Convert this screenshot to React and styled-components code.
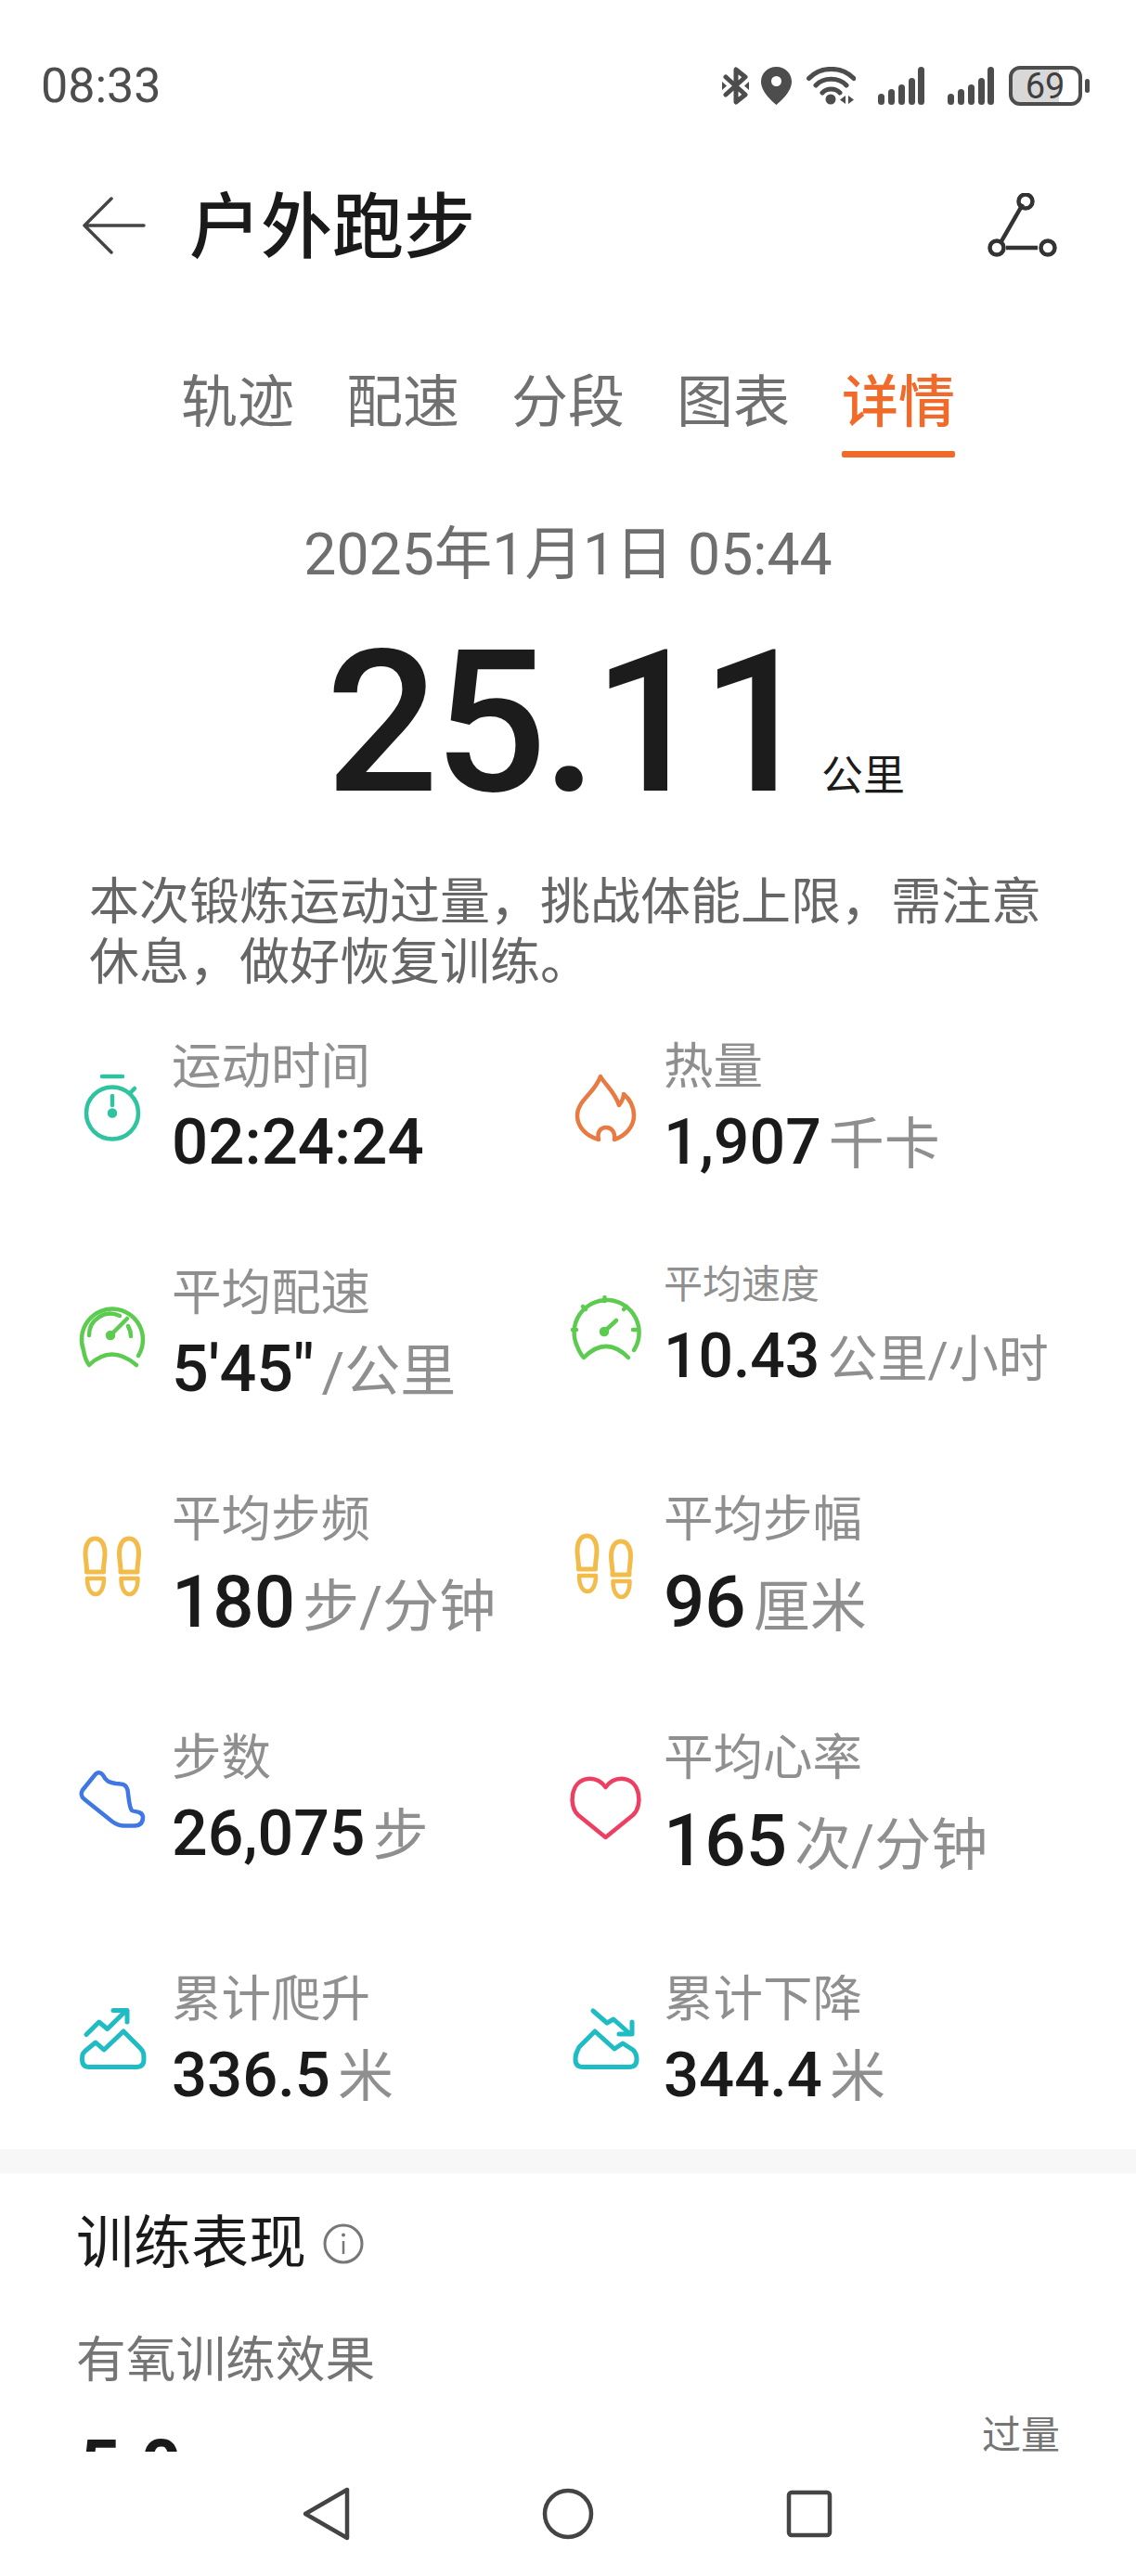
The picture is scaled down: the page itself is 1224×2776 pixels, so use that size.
import React from "react";
import styled, { createGlobalStyle } from "styled-components";

const Global = createGlobalStyle`
  html, body { margin: 0; padding: 0; background: #fff; }
  * { box-sizing: border-box; }
  body { font-family: Roboto, "Noto Sans CJK SC", sans-serif; color: #1a1a1a; }
`;

const Page = styled.div`
  width: 1224px;
  height: 2776px;
  overflow: hidden;
  background: #fff;
  display: flex;
  flex-direction: column;
`;
const Scroller = styled.main`
  height: 2642px;
  overflow: hidden;
  flex: none;
`;
const StatusBar = styled.div`
  height: 184px;
  padding: 0 50px 0 44px;
  display: flex;
  align-items: center;
  justify-content: space-between;
`;
const Clock = styled.span`
  font-size: 52px;
  color: #4d4d4d;
`;
const StatusIcons = styled.div`
  display: flex;
  align-items: center;
`;
const StatusGlyph = styled.svg`
  display: block;
  flex: none;
  margin-left: ${(p) => p.$gap}px;
  fill: #4d4d4d;
`;
const Header = styled.header`
  height: 118px;
  padding: 0 84px 0 88px;
  display: flex;
  align-items: center;
`;
const BackIcon = styled.svg`
  display: block;
  flex: none;
  margin-right: 46px;
`;
const Title = styled.h1`
  margin: 6px 0 0;
  flex: 1;
  font-size: 77px;
  line-height: 100px;
  font-weight: 500;
  color: #1a1a1a;
`;
const RouteIcon = styled.svg`
  display: block;
  flex: none;
`;
const Tabs = styled.nav`
  margin-top: 83px;
  padding-left: 195px;
  display: flex;
  gap: 56px;
`;
const Tab = styled.div`
  display: flex;
  flex-direction: column;
  font-size: 61px;
  line-height: 98px;
  font-weight: ${(p) => (p.$active ? 500 : 400)};
  color: ${(p) => (p.$active ? "#f26a2a" : "#707070")};
  &::after {
    content: "";
    display: block;
    height: 7px;
    margin-top: 3px;
    border-radius: 2px;
    background: ${(p) => (p.$active ? "#f26a2a" : "transparent")};
  }
`;
const DateLine = styled.div`
  margin-top: 70px;
  text-align: center;
  font-size: 62.5px;
  line-height: 70px;
  color: #6f6f6f;
`;
const Hero = styled.div`
  margin-top: 36px;
  padding-left: 351px;
  display: flex;
  align-items: baseline;
`;
const HeroNumber = styled.span`
  font-size: 214px;
  line-height: 220px;
  font-weight: 500;
  letter-spacing: -5px;
  color: #1c1c1c;
`;
const HeroUnit = styled.span`
  font-size: 45px;
  margin-left: 13px;
  color: #1c1c1c;
`;
const Summary = styled.p`
  margin: 51px 0 0;
  padding: 0 90px 0 96px;
  font-size: 54px;
  line-height: 65px;
  color: #666;
`;
const StatsGrid = styled.section`
  margin-top: 50px;
  padding-left: 79px;
  display: grid;
  grid-template-columns: 530px 1fr;
  grid-template-rows: 244px 244px 257px 260px 191px;
  align-items: start;
`;
const Stat = styled.div`
  display: flex;
  align-items: center;
  gap: 22px;
`;
const IconSvg = styled.svg`
  display: block;
  flex: none;
  fill: none;
  stroke: ${(p) => p.$color};
  stroke-width: 4.5;
  stroke-linecap: round;
  stroke-linejoin: round;
`;
const StatText = styled.div`
  display: flex;
  flex-direction: column;
`;
const StatLabel = styled.div`
  height: ${(p) => p.$height}px;
  font-size: ${(p) => p.$size}px;
  line-height: ${(p) => p.$height}px;
  color: #8f8f8f;
  white-space: nowrap;
`;
const StatValue = styled.div`
  margin-top: ${(p) => p.$gap}px;
  height: 80px;
  line-height: 80px;
  white-space: nowrap;
`;
const StatNumber = styled.span`
  font-size: ${(p) => p.$size}px;
  font-weight: 500;
  color: #1a1a1a;
`;
const StatUnit = styled.span`
  margin-left: 8px;
  font-size: ${(p) => p.$size}px;
  color: #8f8f8f;
`;
const Band = styled.div`
  height: 26px;
  background: #f7f7f7;
`;
const Training = styled.section`
  padding: 36px 82px 0 82px;
`;
const TrainingHead = styled.div`
  display: flex;
  align-items: center;
  gap: 18px;
`;
const TrainingTitle = styled.h2`
  margin: 0;
  font-size: 62px;
  line-height: 80px;
  font-weight: 400;
  color: #1a1a1a;
`;
const InfoIcon = styled.svg`
  display: block;
  flex: none;
`;
const EffectLabel = styled.div`
  margin-top: 56px;
  font-size: 53.7px;
  line-height: 60px;
  color: #757575;
`;
const EffectRow = styled.div`
  margin-top: 26px;
  display: flex;
  justify-content: space-between;
  align-items: flex-start;
`;
const EffectValue = styled.div`
  margin: 17px 0 0 4px;
  font-size: 76px;
  line-height: 80px;
  font-weight: 700;
  color: #1a1a1a;
`;
const EffectLevel = styled.div`
  font-size: 42px;
  line-height: 50px;
  color: #757575;
`;
const NavBar = styled.nav`
  height: 134px;
  flex: none;
  background: #fff;
  display: flex;
  align-items: center;
  justify-content: center;
  gap: 201px;
`;
const NavIcon = styled.svg`
  display: block;
  flex: none;
  fill: none;
  stroke: #444;
  stroke-width: 4.5;
  stroke-linejoin: round;
`;

const Icon = ({ color, children }) => (
  <IconSvg width="84" height="84" viewBox="0 0 84 84" $color={color}>
    {children}
  </IconSvg>
);

const Stopwatch = () => (
  <Icon color="#2fc3a0">
    <circle cx="42" cy="45.5" r="28" />
    <path d="M31 6h22M42 27v10M61 24l5-5" />
    <circle cx="42" cy="45.5" r="3" fill="#2fc3a0" />
  </Icon>
);
const Flame = () => (
  <Icon color="#e87a42">
    <path d="M38 6C43 15 53 22 58 37C61 33 63 29 63 25C70 31 74 39 74 48C74 60 65 70 53 74C54 66 50 61 44 61C38 61 34 66 36 74C22 70 13 60 13 48C13 32 32 24 38 6Z" />
  </Icon>
);
const PaceGauge = () => (
  <Icon color="#5ccb50">
    <path d="M70 63A33 33 0 1 0 11 57C12 64 14 69 17 73Q41 50 68 73" />
    <path d="M17 41A23 23 0 0 1 50 20M59 31A22 22 0 0 1 62 42M40 41L58 23" />
    <circle cx="40" cy="41" r="3" fill="#5ccb50" />
  </Icon>
);
const SpeedGauge = () => (
  <Icon color="#5ccb50">
    <path d="M74 64A35 35 0 1 0 13 60C15 65 17 69 20 72Q44 48 68 72" />
    <path d="M42.5 7v4M19 17l3 3M66 17l-3 3M8 42h4M73 42h4M42 44L55 32" />
    <circle cx="42" cy="44" r="3" fill="#5ccb50" />
  </Icon>
);
const Foot = ({ x, y }) => (
  <g transform={`translate(${x} ${y})`}>
    <path d="M23.5 12C31 12 34 20 34 28C34 36 32 41 32.5 48L14.5 48C15 41 13 36 13 28C13 20 16 12 23.5 12Z" strokeWidth="5" />
    <path d="M15 55H33C33 66 29 72 24 72C19 72 15 66 15 55Z" strokeWidth="4.5" />
  </g>
);
const Feet = ({ stagger }) => (
  <Icon color="#f2bb4a">
    <Foot x={0} y={stagger ? -3 : 0} />
    <Foot x={36.5} y={stagger ? 3 : 0} />
  </Icon>
);
const Shoe = () => (
  <Icon color="#3f78e4">
    <path d="M10 30L23 14C26 10 30 11 32 14C35 20 38 22 46 23C54 23.5 57 24 58.5 30C60 40 60 48 63 52C66 54 74 52 75 59C75 65 72 68.5 66 68.5L55 68.5C50 68.5 46 67 42 64L12 40C8 37 8 33 10 30Z" />
  </Icon>
);
const Heart = () => (
  <Icon color="#ee3f63">
    <path d="M43.5 77L14 53C3 43 6 16 24 14C33 13 39 17 43.5 23C48 17 54 13 63 14C81 16 84 43 73 53Z" />
  </Icon>
);
const Climb = () => (
  <Icon color="#1fbcc4">
    <path d="M14 33.5L27.7 20L36.7 27.5L56 8.5M43 7.5H58V20" strokeWidth="5" />
    <path d="M24 42L33 50L54 30L72 48C76 52 76 55 76 60C76 66 73 68.5 68 68.5H17C12 68.5 9.5 66 9.5 60C9.5 55 10 54 13 51Z" strokeWidth="5" />
  </Icon>
);
const Descent = () => (
  <Icon color="#1fbcc4">
    <path d="M30 8L45 21L52 17L70 33M72 20V33H58" strokeWidth="5" />
    <path d="M32 30L53 49L62 43L73 50C76 53 77 56 77 60C77 66 74 68.5 69 68.5H19C14 68.5 11 66 11 60C11 55 12 53 15 47Z" strokeWidth="5" />
  </Icon>
);

const stats = [
  { key: "time", icon: <Stopwatch />, label: "运动时间", value: "02:24:24", size: 69 },
  { key: "cal", icon: <Flame />, label: "热量", value: "1,907", size: 68, unit: "千卡", unitSize: 60 },
  { key: "pace", icon: <PaceGauge />, label: "平均配速", value: "5'45\"", size: 70, unit: "/公里", unitSize: 60 },
  { key: "speed", icon: <SpeedGauge />, label: "平均速度", labelSize: 42, labelHeight: 42, gap: 16, value: "10.43", size: 66, unit: "公里/小时", unitSize: 54 },
  { key: "cadence", icon: <Feet />, label: "平均步频", value: "180", size: 78, unit: "步/分钟", unitSize: 61, gap: 19 },
  { key: "stride", icon: <Feet stagger />, label: "平均步幅", value: "96", size: 78, unit: "厘米", unitSize: 61, gap: 19 },
  { key: "steps", icon: <Shoe />, label: "步数", value: "26,075", size: 68, unit: "步", unitSize: 60, gap: 11 },
  { key: "hr", icon: <Heart />, label: "平均心率", value: "165", size: 78, unit: "次/分钟", unitSize: 61, gap: 19 },
  { key: "up", icon: <Climb />, label: "累计爬升", value: "336.5", size: 67, unit: "米", unitSize: 60, gap: 11 },
  { key: "down", icon: <Descent />, label: "累计下降", value: "344.4", size: 67, unit: "米", unitSize: 60, gap: 11 },
];

const StatusCluster = () => (
  <StatusIcons>
    <StatusGlyph $gap={0} width="29" height="41" viewBox="0 0 29 41">
      <path d="M4 11L25 30L15 38V26M4 30L25 11L15 3V15" fill="none" stroke="#4d4d4d" strokeWidth="5" strokeLinecap="round" strokeLinejoin="round" />
      <path d="M0 16l5 4.5-5 4.5zM29 16l-5 4.5 5 4.5z" />
    </StatusGlyph>
    <StatusGlyph $gap={13} width="33" height="41" viewBox="0 0 33 41">
      <path fillRule="evenodd" d="M16.5 0C7 0 0 7 0 16C0 27 12 37 16.5 41C21 37 33 27 33 16C33 7 26 0 16.5 0ZM16.5 10a5.5 5.5 0 1 1 0 11a5.5 5.5 0 1 1 0-11Z" />
    </StatusGlyph>
    <StatusGlyph $gap={16} width="53" height="41" viewBox="0 0 53 41">
      <path d="M2.5 12.5C15 -1 38 -1 51 12.5M10 20C18 11 35 11 43 20M17 28C22 22.5 31 22.5 36 28" fill="none" stroke="#4d4d4d" strokeWidth="5" strokeLinecap="round" />
      <circle cx="26" cy="35" r="5.5" />
      <path d="M42 31v9l-6-4.5zM45 31v9l6-4.5z" />
    </StatusGlyph>
    {[24, 25].map((gap) => (
      <StatusGlyph key={gap} $gap={gap} width="50" height="41" viewBox="0 0 50 41">
        <rect x="0" y="29" width="7" height="12" rx="3.5" />
        <rect x="11" y="24" width="7" height="17" rx="3.5" />
        <rect x="22" y="19" width="7" height="22" rx="3.5" />
        <rect x="33" y="12" width="7" height="29" rx="3.5" />
        <rect x="43" y="0" width="7" height="41" rx="3.5" />
      </StatusGlyph>
    ))}
    <StatusGlyph $gap={16} width="87" height="43" viewBox="0 0 87 43">
      <path d="M10 2H54V41H10A8 8 0 0 1 2 33V10A8 8 0 0 1 10 2Z" fill="#d8d8d8" />
      <rect x="2" y="2" width="75" height="39" rx="10" fill="none" stroke="#4d4d4d" strokeWidth="4" />
      <rect x="82" y="14" width="5" height="15" rx="2.5" />
      <text x="39" y="35" textAnchor="middle" fontFamily="Roboto, sans-serif" fontSize="38" fill="#3f3f3f">69</text>
    </StatusGlyph>
  </StatusIcons>
);

export default function App() {
  return (
    <>
      <Global />
      <Page>
        <Scroller>
          <StatusBar>
            <Clock>08:33</Clock>
            <StatusCluster />
          </StatusBar>
          <Header>
            <BackIcon width="70" height="62" viewBox="0 0 70 62">
              <path d="M32 2L3 31L32 60M3 31H67" fill="none" stroke="#444" strokeWidth="3.5" strokeLinecap="round" strokeLinejoin="round" />
            </BackIcon>
            <Title>户外跑步</Title>
            <RouteIcon width="78" height="70" viewBox="0 0 78 70">
              <path d="M40 12L17 52M22 59H56" fill="none" stroke="#333" strokeWidth="4.5" />
              <circle cx="43" cy="9" r="7.5" fill="none" stroke="#333" strokeWidth="4.5" />
              <circle cx="12" cy="59" r="7.5" fill="none" stroke="#333" strokeWidth="4.5" />
              <circle cx="67" cy="59" r="7.5" fill="none" stroke="#333" strokeWidth="4.5" />
            </RouteIcon>
          </Header>
          <Tabs>
            <Tab>轨迹</Tab>
            <Tab>配速</Tab>
            <Tab>分段</Tab>
            <Tab>图表</Tab>
            <Tab $active>详情</Tab>
          </Tabs>
          <DateLine>2025年1月1日 05:44</DateLine>
          <Hero>
            <HeroNumber>25.11</HeroNumber>
            <HeroUnit>公里</HeroUnit>
          </Hero>
          <Summary>
            本次锻炼运动过量，挑战体能上限，需注意
            <br />
            休息，做好恢复训练。
          </Summary>
          <StatsGrid>
            {stats.map((s) => (
              <Stat key={s.key}>
                {s.icon}
                <StatText>
                  <StatLabel $size={s.labelSize ?? 53.5} $height={s.labelHeight ?? 60}>{s.label}</StatLabel>
                  <StatValue $gap={s.gap ?? 11}>
                    <StatNumber $size={s.size}>{s.value}</StatNumber>
                    {s.unit && <StatUnit $size={s.unitSize}>{s.unit}</StatUnit>}
                  </StatValue>
                </StatText>
              </Stat>
            ))}
          </StatsGrid>
          <Band />
          <Training>
            <TrainingHead>
              <TrainingTitle>训练表现</TrainingTitle>
              <InfoIcon width="44" height="44" viewBox="0 0 44 44">
                <circle cx="22" cy="22" r="20" fill="none" stroke="#777" strokeWidth="3" />
                <path d="M22 19v14" stroke="#777" strokeWidth="2.5" />
                <circle cx="22" cy="12.5" r="2" fill="#777" />
              </InfoIcon>
            </TrainingHead>
            <EffectLabel>有氧训练效果</EffectLabel>
            <EffectRow>
              <EffectValue>5.0</EffectValue>
              <EffectLevel>过量</EffectLevel>
            </EffectRow>
          </Training>
        </Scroller>
        <NavBar>
          <NavIcon width="60" height="60" viewBox="0 0 60 60">
            <path d="M53 4V56L8 30Z" />
          </NavIcon>
          <NavIcon width="60" height="60" viewBox="0 0 60 60">
            <circle cx="30" cy="30" r="25" />
          </NavIcon>
          <NavIcon width="60" height="60" viewBox="0 0 60 60">
            <rect x="7" y="7" width="44" height="46" rx="3" />
          </NavIcon>
        </NavBar>
      </Page>
    </>
  );
}
